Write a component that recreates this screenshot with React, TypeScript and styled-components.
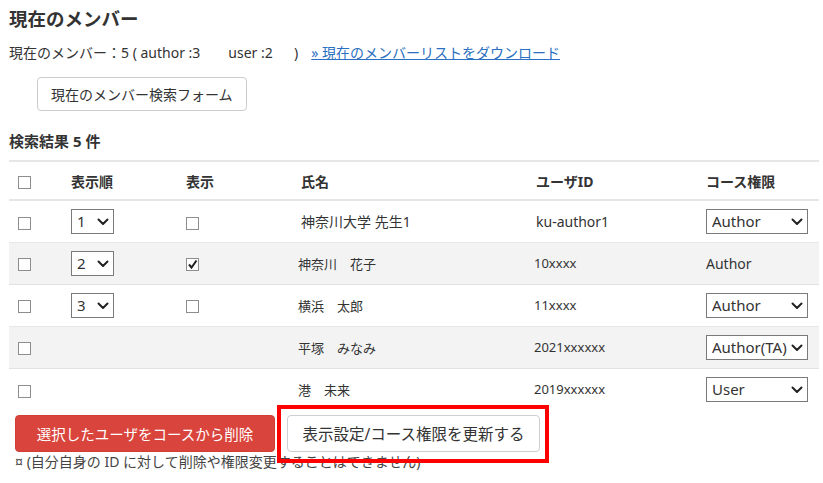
import styled, { createGlobalStyle } from "styled-components"

const GlobalStyle = createGlobalStyle`
  html, body {
    margin: 0;
    padding: 0;
    background: #fff;
  }
  body {
    font-family: "Noto Sans", "Noto Sans CJK JP", "Liberation Sans", sans-serif;
    color: #333;
  }
`

type Member = {
  id: number
  order?: number
  visible?: boolean
  name: string
  userId: string
  role?: string
  roleFixed?: string
  compact?: boolean
}

const members: Member[] = [
  { id: 1, order: 1, visible: false, name: "神奈川大学 先生1", userId: "ku-author1", role: "Author" },
  { id: 2, order: 2, visible: true, name: "神奈川　花子", userId: "10xxxx", roleFixed: "Author", compact: true },
  { id: 3, order: 3, visible: false, name: "横浜　太郎", userId: "11xxxx", role: "Author", compact: true },
  { id: 4, name: "平塚　みなみ", userId: "2021xxxxxx", role: "Author(TA)", compact: true },
  { id: 5, name: "港　未来", userId: "2019xxxxxx", role: "User", compact: true },
]

const Chevron = () => (
  <svg width="12" height="8" viewBox="0 0 12 8">
    <path d="M1.5 1.5 L6 6 L10.5 1.5" fill="none" stroke="#222" strokeWidth="2" strokeLinecap="round" strokeLinejoin="round" />
  </svg>
)

const Check = () => (
  <svg width="11" height="11" viewBox="0 0 11 11">
    <path d="M2 5.5 L4.5 8.5 L9.5 1.5" fill="none" stroke="#222" strokeWidth="2" />
  </svg>
)

const App = () => {
  return (
    <Page>
      <GlobalStyle />
      <Title>現在のメンバー</Title>
      <Summary>
        <span>現在のメンバー：5 ( author :3　　user :2 　 )</span>
        <DownloadLink href="#">» 現在のメンバーリストをダウンロード</DownloadLink>
      </Summary>
      <SearchButton>現在のメンバー検索フォーム</SearchButton>
      <ResultCount>検索結果 5 件</ResultCount>

      <Table>
        <colgroup>
          <col style={{ width: 53 }} />
          <col style={{ width: 115 }} />
          <col style={{ width: 115 }} />
          <col style={{ width: 235 }} />
          <col style={{ width: 170 }} />
          <col />
        </colgroup>
        <thead>
          <tr>
            <Th><Box /></Th>
            <Th>表示順</Th>
            <Th>表示</Th>
            <Th>氏名</Th>
            <Th>ユーザID</Th>
            <Th>コース権限</Th>
          </tr>
        </thead>
        <tbody>
          {members.map((m, i) => (
            <Row key={m.id} striped={i % 2 === 1}>
              <Td><Box /></Td>
              <Td>
                {m.order && (
                  <SelectWrap width={43}>
                    <Select defaultValue={m.order}>
                      <option>{m.order}</option>
                    </Select>
                    <Arrow><Chevron /></Arrow>
                  </SelectWrap>
                )}
              </Td>
              <Td>{m.order && <Box>{m.visible && <Check />}</Box>}</Td>
              <Td compact={m.compact} indent={m.compact ? -3 : 0}>{m.name}</Td>
              <Td compact={m.compact} indent={m.compact ? -2 : 0}>{m.userId}</Td>
              <Td>
                {m.role ? (
                  <SelectWrap width={102}>
                    <Select defaultValue={m.role}>
                      <option>{m.role}</option>
                    </Select>
                    <Arrow><Chevron /></Arrow>
                  </SelectWrap>
                ) : (
                  <FixedRole>{m.roleFixed}</FixedRole>
                )}
              </Td>
            </Row>
          ))}
        </tbody>
      </Table>

      <Actions>
        <DangerButton>選択したユーザをコースから削除</DangerButton>
        <UpdateButton>表示設定/コース権限を更新する</UpdateButton>
        <Highlight />
      </Actions>
      <Note>¤ (自分自身の ID に対して削除や権限変更することはできません)</Note>
    </Page>
  )
}

const Page = styled.div`
  padding: 6px 5px 0 9px;
`

const Title = styled.h2`
  margin: 0;
  font-size: 18.5px;
  line-height: 26px;
  font-weight: 700;
  color: #333;
`

const Summary = styled.p`
  margin: 11px 0 0;
  font-size: 14px;
  line-height: 20px;
  display: flex;
  gap: 13px;
  white-space: pre;
`

const DownloadLink = styled.a`
  color: #2a6fc0;
  text-decoration: underline;
`

const SearchButton = styled.button`
  display: block;
  margin: 14px 0 0 28px;
  height: 34px;
  padding: 0 13px;
  background: #fff;
  border: 1px solid #ccc;
  border-radius: 4px;
  font-family: inherit;
  font-size: 14px;
  color: #333;
`

const ResultCount = styled.h3`
  margin: 20px 0 0;
  font-size: 15px;
  line-height: 20px;
  font-weight: 700;
`

const Table = styled.table`
  margin-top: 9px;
  width: 810px;
  border-collapse: collapse;
  table-layout: fixed;
  font-size: 14px;
  color: #333;
`

const Th = styled.th`
  height: 37px;
  padding: 0 0 0 9px;
  text-align: left;
  font-weight: 700;
  font-size: 14px;
  border-top: 2px solid #e6e6e6;
  border-bottom: 2px solid #e6e6e6;
  vertical-align: middle;
`

const Row = styled.tr<{ striped?: boolean }>`
  height: 42px;
  background: ${(p) => (p.striped ? "#f3f3f3" : "#fff")};
  border-bottom: 1px solid ${(p) => (p.striped ? "#e2e2e2" : "#e8e8e8")};
  &:last-child {
    border-bottom: none;
  }
`

const Td = styled.td<{ compact?: boolean; indent?: number }>`
  padding: 0 0 0 ${(p) => 9 + (p.indent ?? 0)}px;
  font-size: ${(p) => (p.compact ? "13px" : "14px")};
  vertical-align: middle;
  white-space: nowrap;
`

const Box = styled.span`
  display: inline-flex;
  align-items: center;
  justify-content: center;
  width: 11px;
  height: 11px;
  border: 1px solid #8d8d8d;
  background: #fff;
  vertical-align: middle;
`

const SelectWrap = styled.span<{ width: number }>`
  position: relative;
  display: inline-block;
  width: ${(p) => p.width}px;
  height: 25px;
  vertical-align: middle;
`

const Select = styled.select`
  appearance: none;
  width: 100%;
  height: 100%;
  margin: 0;
  padding: 0 0 0 5px;
  border: 1px solid #7a7a7a;
  border-radius: 0;
  background: #fff;
  font-family: "Noto Sans", "Liberation Sans", sans-serif;
  font-size: 15px;
  color: #333;
`

const Arrow = styled.span`
  position: absolute;
  right: 5px;
  top: 9px;
  display: flex;
  pointer-events: none;
`

const FixedRole = styled.span`
  font-size: 14px;
`

const Actions = styled.div`
  position: relative;
  display: flex;
  gap: 12px;
  margin: 5px 0 0 6px;
  width: max-content;
`

const BaseButton = styled.button`
  height: 37px;
  border-radius: 4px;
  font-family: inherit;
`

const DangerButton = styled(BaseButton)`
  width: 260px;
  font-size: 14.5px;
  background: #d9443c;
  border: 1px solid #d23d35;
  color: #fff;
`

const UpdateButton = styled(BaseButton)`
  width: 253px;
  font-size: 15.5px;
  background: #fff;
  border: 1px solid #cfcfcf;
  color: #333;
`

const Highlight = styled.div`
  position: absolute;
  left: 262px;
  top: -10px;
  width: 264px;
  height: 50px;
  border: 4px solid #ff0000;
  pointer-events: none;
  z-index: 2;
`

const Note = styled.p`
  margin: 0 0 0 6px;
  font-size: 14px;
  line-height: 20px;
  color: #444;
`

export default App
